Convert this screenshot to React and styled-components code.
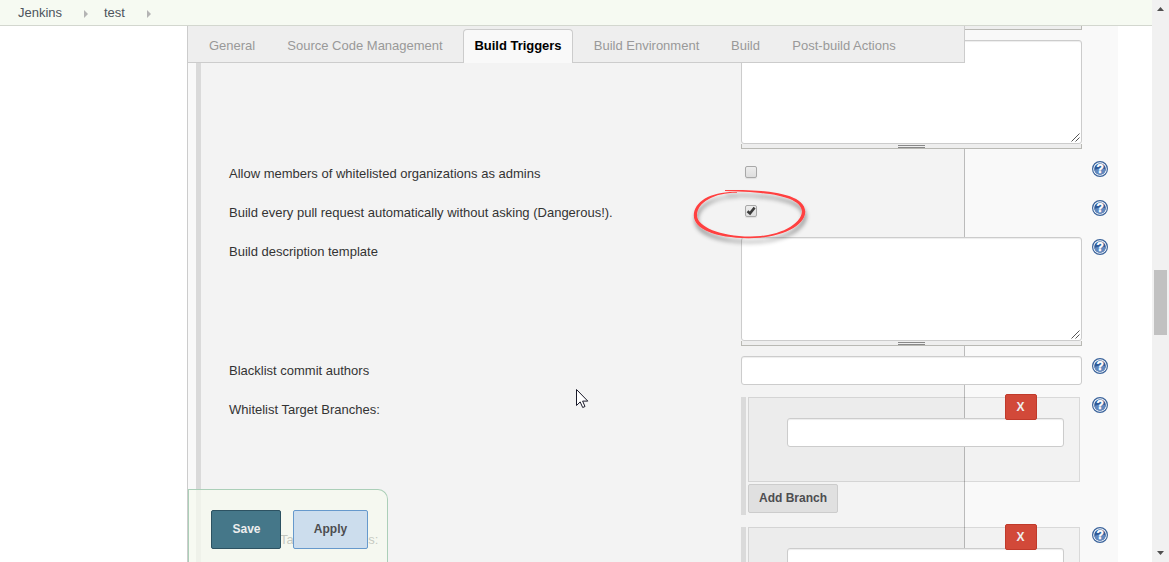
import React from "react";
import styled, { createGlobalStyle, css } from "styled-components";

const GlobalStyle = createGlobalStyle`
  *, *::before, *::after { box-sizing: border-box; }
  html, body { margin: 0; padding: 0; background: #fff; overflow: hidden; }
  body { font: 13px/18px "Liberation Sans", Arial, sans-serif; color: #333; }
`;

const Page = styled.div`
  position: relative;
  display: flex;
  width: 1169px;
  height: 562px;
  overflow: hidden;
`;

const Content = styled.div`
  flex: 1;
  display: flex;
  flex-direction: column;
  min-width: 0;
`;

const Breadcrumbs = styled.nav`
  flex: none;
  display: flex;
  align-items: center;
  height: 26px;
  padding-left: 18px;
  background: #f6faf2;
  border-bottom: 1px solid #d3d7cf;
  color: #4d545d;
`;

const Crumb = styled.span`
  width: ${(p) => p.$width}px;
  white-space: nowrap;
`;

const CrumbArrow = styled.span`
  width: 4px;
  margin-right: 16px;
  margin-top: 2px;
  border: 4px solid transparent;
  border-left-color: #b4b4b4;
  border-right: 0;
`;

const Body = styled.main`
  position: relative;
  flex: 1;
  display: flex;
  min-height: 0;
  padding-left: 187px;
  overflow: hidden;
`;

const Panel = styled.div`
  width: 931px;
  height: 536px;
  padding-left: 8px;
  background: #f9f9f9;
  border-left: 1px solid #ccc;
  overflow: hidden;
`;

const Section = styled.section`
  width: 769px;
  height: 620px;
  padding-left: 28px;
  background: #f3f3f3;
  border-left: 5px solid #dadada;
  border-right: 1px solid #bbb;
`;

const Row = styled.div`
  display: grid;
  grid-template-columns: 512px 341px 26px;
  width: 880px;
  height: ${(p) => p.$height}px;
`;

const Label = styled.label`
  padding-top: 6px;
  white-space: nowrap;
`;

const Control = styled.div`
  padding-top: ${(p) => p.$top || 0}px;
  padding-left: ${(p) => p.$left || 0}px;
`;

const Help = styled.svg`
  width: 16px;
  height: 16px;
  margin: 2px 0 0 10px;
`;

const field = css`
  display: block;
  background: #fff;
  border: 1px solid #ccc;
  border-radius: 3px;
  box-shadow: inset 0 1px 1px rgba(0, 0, 0, 0.075);
`;

const Input = styled.input`
  ${field}
  width: ${(p) => p.$width}px;
  height: 29px;
  padding: 4px;
  outline: 0;
`;

const AreaBox = styled.div`
  ${field}
  display: flex;
  align-items: flex-end;
  justify-content: flex-end;
  width: 341px;
  height: 104px;
  padding: 0 1px 1px 0;
`;

const Handle = styled.div`
  display: flex;
  justify-content: center;
  align-items: flex-end;
  width: 341px;
  height: ${(p) => p.$height || 5}px;
  background: #eee;
  border: 1px solid #b9b9b4;
  border-top: 0;

  &::after {
    content: "";
    width: 27px;
    height: 3px;
    border-top: 1px solid #888;
    border-bottom: 1px solid #888;
  }
`;

const Check = styled.span`
  display: flex;
  align-items: center;
  justify-content: center;
  width: 12px;
  height: 12px;
  background: linear-gradient(#ededed, #dedede);
  border: 1px solid #a8a8a8;
  border-radius: 2px;
  box-shadow: 0 1px 1px rgba(0, 0, 0, 0.08);
`;

const Branches = styled.div`
  display: flex;
  flex-direction: column;
  align-items: flex-start;
  gap: 2px;
  width: 341px;
  height: 118px;
  padding-left: 2px;
  border-left: 5px solid #dadada;
`;

const Chunk = styled.div`
  position: relative;
  width: 332px;
  height: 85px;
  padding: 20px 0 0 38px;
  background: rgba(0, 0, 0, 0.027);
  border: 1px solid rgba(0, 0, 0, 0.1);
`;

const Button = styled.button`
  display: flex;
  align-items: center;
  justify-content: center;
  padding: 0;
  border: 1px solid;
  border-radius: 2px;
  font: bold 12px/16px "Liberation Sans", Arial, sans-serif;
`;

const DeleteButton = styled(Button)`
  position: absolute;
  top: -4px;
  left: 256px;
  width: 32px;
  height: 26px;
  padding-right: 1px;
  background: #d24939;
  border-color: #c03a2b;
  color: #eee;
`;

const AddButton = styled(Button)`
  width: 90px;
  height: 29px;
  padding-bottom: 2px;
  background: #e0e0e0;
  border-color: #ccc;
  color: #4d4d50;
`;

const SaveButton = styled(Button)`
  width: 70px;
  height: 39px;
  padding: 0 0 2px 1px;
  background: #457789;
  border-color: #2d5262;
  color: #eee;
`;

const ApplyButton = styled(Button)`
  width: 75px;
  height: 39px;
  padding-bottom: 2px;
  background: #ccdded;
  border-color: #6699cc;
  color: #4d4d50;
`;

const TabBar = styled.div`
  position: absolute;
  top: 0;
  left: 187px;
  display: flex;
  align-items: flex-end;
  width: 778px;
  height: 37px;
  background: #eee;
  border: solid #ccc;
  border-width: 0 1px 1px;
`;

const Tab = styled.div`
  width: ${(p) => p.$width}px;
  height: 33px;
  padding-top: 7px;
  text-align: center;
  white-space: nowrap;
  color: #999;
  border: 1px solid transparent;
  border-bottom: 0;
  ${(p) =>
    p.$active &&
    css`
      height: 34px;
      margin-bottom: -1px;
      margin-left: 9px;
      font-weight: bold;
      letter-spacing: -0.02px;
      color: #000;
      background: #f9f9f9;
      border-color: #ccc;
      border-radius: 4px 4px 0 0;
    `}
`;

const BottomBar = styled.div`
  position: absolute;
  left: 188px;
  bottom: 0;
  display: flex;
  gap: 12px;
  width: 200px;
  height: 73px;
  padding: 20px 0 0 22px;
  background: rgba(245, 249, 239, 0.75);
  border: 1px solid #abcfb8;
  border-bottom: 0;
  border-radius: 0 10px 0 0;
`;

const Scrollbar = styled.div`
  flex: none;
  display: flex;
  flex-direction: column;
  align-items: center;
  justify-content: space-between;
  width: 17px;
  padding: 6px 0;
  background: #f1f1f1;
`;

const Thumb = styled.div`
  width: 13px;
  height: 65px;
  margin-top: 42px;
  background: #c1c1c1;
`;

const Annotation = styled.svg`
  position: absolute;
  left: 684px;
  top: 180px;
`;

const Pointer = styled.svg`
  position: absolute;
  left: 576px;
  top: 389px;
`;

function HelpIcon() {
  return (
    <Help viewBox="0 0 16 16">
      <circle cx="8" cy="8" r="7.4" fill="#fff" stroke="#3a639b" strokeWidth="1.2" />
      <circle cx="8" cy="8" r="5.8" fill="#2f5a98" />
      <path d="M2.4 9a5.7 5.7 0 0 0 11.2 0C12.5 6.5 5 7.5 2.4 9z" fill="#6288bd" />
      <text x="8.2" y="12.3" textAnchor="middle" fontSize="12" fontWeight="bold" fill="#fff" stroke="#fff" strokeWidth="0.4" fontFamily="Liberation Sans">?</text>
    </Help>
  );
}

function TextArea() {
  return (
    <div>
      <AreaBox>
        <svg width="9" height="9" viewBox="0 0 9 9" stroke="#555" strokeWidth="1" fill="none">
          <path d="M.5 8.5l8-8M4.5 8.5l4-4" />
        </svg>
      </AreaBox>
      <Handle />
    </div>
  );
}

function FormRow({ label, height = 39, top, left, help = true, children }) {
  return (
    <Row $height={height}>
      <Label>{label}</Label>
      <Control $top={top} $left={left}>{children}</Control>
      {help && <HelpIcon />}
    </Row>
  );
}

function BranchList() {
  return (
    <Branches>
      <Chunk>
        <Input $width={277} />
        <DeleteButton>X</DeleteButton>
      </Chunk>
      <AddButton>Add Branch</AddButton>
    </Branches>
  );
}

const tabs = [
  ["General", 88],
  ["Source Code Management", 178],
  ["Build Triggers", 110],
  ["Build Environment", 147],
  ["Build", 51],
  ["Post-build Actions", 146],
];

export default function App() {
  return (
    <Page>
      <GlobalStyle />
      <Content>
        <Breadcrumbs>
          <Crumb $width={66}>Jenkins</Crumb>
          <CrumbArrow />
          <Crumb $width={43}>test</Crumb>
          <CrumbArrow />
        </Breadcrumbs>
        <Body>
          <Panel>
            <Section>
              <FormRow height={14} help={false}>
                <Handle $height={4} />
              </FormRow>
              <FormRow height={119} help={false}>
                <TextArea />
              </FormRow>
              <FormRow label="Allow members of whitelisted organizations as admins" top={7} left={4}>
                <Check />
              </FormRow>
              <FormRow label="Build every pull request automatically without asking (Dangerous!)." top={7} left={4}>
                <Check>
                  <svg width="10" height="10" viewBox="0 0 10 10" fill="none" stroke="#3c3c3c" strokeWidth="2.5">
                    <path d="M1.5 5.2L4 7.4L8.6 1.6" />
                  </svg>
                </Check>
              </FormRow>
              <FormRow label="Build description template" height={119}>
                <TextArea />
              </FormRow>
              <FormRow label="Blacklist commit authors">
                <Input $width={341} />
              </FormRow>
              <FormRow label="Whitelist Target Branches:" height={130} top={2}>
                <BranchList />
              </FormRow>
              <FormRow label="Blacklist Target Branches:" height={130} top={2}>
                <BranchList />
              </FormRow>
            </Section>
          </Panel>
          <TabBar>
            {tabs.map(([name, width]) => (
              <Tab key={name} $width={width} $active={name === "Build Triggers"}>{name}</Tab>
            ))}
          </TabBar>
          <BottomBar>
            <SaveButton>Save</SaveButton>
            <ApplyButton>Apply</ApplyButton>
          </BottomBar>
        </Body>
      </Content>
      <Scrollbar>
        <svg width="7" height="5" viewBox="0 0 7 5"><path d="M3.5 1L7 5H0z" fill="#505050" /></svg>
        <Thumb />
        <svg width="7" height="5" viewBox="0 0 7 5"><path d="M0 0h7L3.5 4z" fill="#505050" /></svg>
      </Scrollbar>
      <Annotation width="136" height="74" viewBox="684 180 136 74">
        <defs>
          <filter id="shade" x="-10%" y="-20%" width="125%" height="150%">
            <feDropShadow dx="1" dy="4.5" stdDeviation="2" floodColor="#000" floodOpacity="0.45" />
          </filter>
        </defs>
        <path
          filter="url(#shade)"
          fill="#ff4040"
          d="M725 190.1C765 189.5 804.5 193 805.3 211.5C805 227 779 238.5 748 238.2C715 237.8 694 229 693.8 215.5C694 201 712 191 737 192L737 192.7C715 192.5 697 202 697 215.5C697.5 227 720 236 750 236.6C778 236.8 801 225 802 211.5C801 198 775 192 725 190.9Z"
        />
      </Annotation>
      <Pointer width="13" height="20" viewBox="0 0 13 20">
        <path d="M.5.5v16l3.7-3.6 2.5 5.6 2.3-1-2.4-5.4h5.2z" fill="#fff" stroke="#1a1a2a" />
      </Pointer>
    </Page>
  );
}
